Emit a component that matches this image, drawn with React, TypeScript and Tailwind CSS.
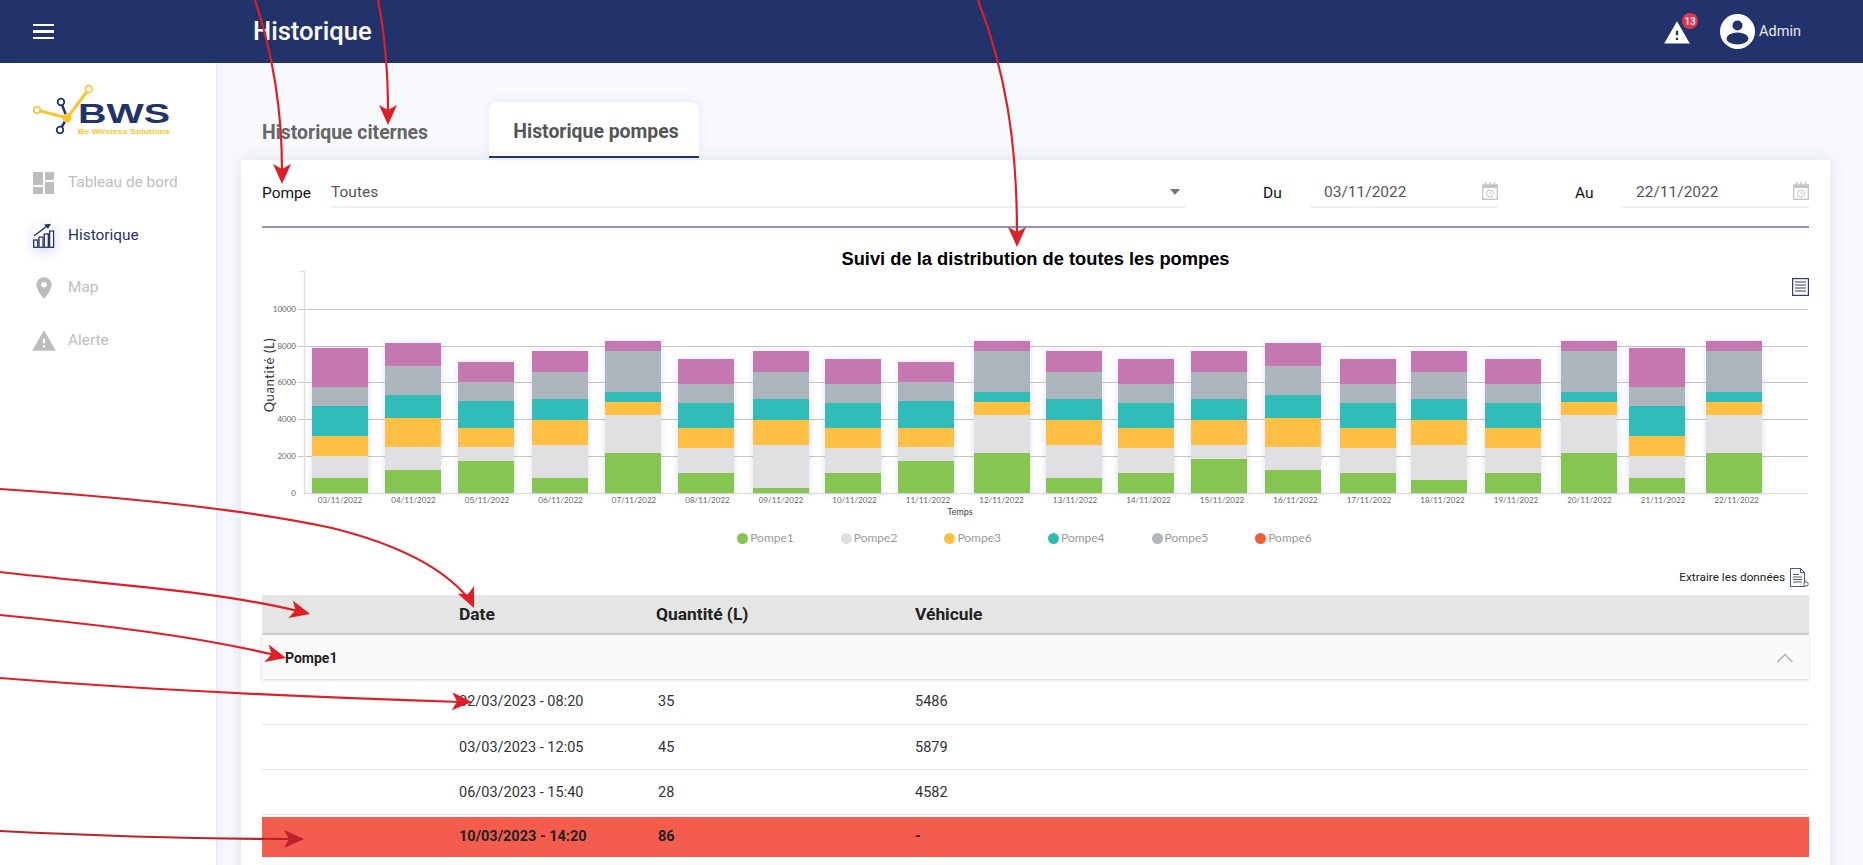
import { ChevronUp } from 'lucide-react'
import { MdLocationOn, MdWarning } from 'react-icons/md'

const COLORS = ['#c578b0', '#adb5bd', '#30bdb9', '#ffc044', '#e0e0e3', '#86c54f']
const LEGEND = [
  { name: 'Pompe1', color: '#86c54f' },
  { name: 'Pompe2', color: '#e0e0e3' },
  { name: 'Pompe3', color: '#ffc044' },
  { name: 'Pompe4', color: '#30bdb9' },
  { name: 'Pompe5', color: '#adb5bd' },
  { name: 'Pompe6', color: '#f05a38' },
]

// segment boundaries, top to bottom, page y
const A = [348, 387, 406, 436, 456, 478, 493]
const B = [343, 366, 395, 418, 447, 470, 493]
const C = [362, 382, 401, 428, 447, 461, 493]
const D = [351, 372, 399, 420, 445, 478, 493]
const E = [341, 351, 392, 402, 415, 453, 493]
const F = [359, 384, 403, 428, 448, 473, 493]
const G = [351, 372, 399, 420, 445, 488, 493]
const H = [351, 372, 399, 420, 445, 459, 493]
const I = [351, 372, 399, 420, 445, 480, 493]

const BARS = [
  { x: 312, label: '03/11/2022', y: A },
  { x: 385, label: '04/11/2022', y: B },
  { x: 458, label: '05/11/2022', y: C },
  { x: 532, label: '06/11/2022', y: D },
  { x: 605, label: '07/11/2022', y: E },
  { x: 678, label: '08/11/2022', y: F },
  { x: 753, label: '09/11/2022', y: G },
  { x: 825, label: '10/11/2022', y: F },
  { x: 898, label: '11/11/2022', y: C },
  { x: 974, label: '12/11/2022', y: E },
  { x: 1046, label: '13/11/2022', y: D },
  { x: 1118, label: '14/11/2022', y: F },
  { x: 1191, label: '15/11/2022', y: H },
  { x: 1265, label: '16/11/2022', y: B },
  { x: 1340, label: '17/11/2022', y: F },
  { x: 1411, label: '18/11/2022', y: I },
  { x: 1485, label: '19/11/2022', y: F },
  { x: 1561, label: '20/11/2022', y: E },
  { x: 1629, label: '21/11/2022', y: A },
  { x: 1706, label: '22/11/2022', y: E },
]

const GRID = [
  { y: 309.5, label: '10000' },
  { y: 346.5, label: '8000' },
  { y: 382.5, label: '6000' },
  { y: 419.5, label: '4000' },
  { y: 456.5, label: '2000' },
]

const ROWS = [
  { date: '02/03/2023 - 08:20', qty: '35', car: '5486', h: 'h-[46px]' },
  { date: '03/03/2023 - 12:05', qty: '45', car: '5879', h: 'h-[45px]' },
  { date: '06/03/2023 - 15:40', qty: '28', car: '4582', h: 'h-[45px]' },
]

function Logo() {
  return (
    <svg width="150" height="60" viewBox="30 82 150 60" className="block">
      <path d="M61 102 L67 118 L60 130" stroke="#22336b" strokeWidth="2.5" fill="none" />
      <circle cx="61" cy="102" r="3.3" fill="#fff" stroke="#22336b" strokeWidth="1.8" />
      <circle cx="60" cy="130" r="3.3" fill="#fff" stroke="#22336b" strokeWidth="1.8" />
      <path d="M37 110 L67 118 L89 89" stroke="#f5c62e" strokeWidth="3" fill="none" />
      <circle cx="37" cy="110" r="3.2" fill="#fff" stroke="#f5c62e" strokeWidth="1.6" />
      <circle cx="89" cy="89" r="3.4" fill="#fff" stroke="#f5c62e" strokeWidth="1.6" />
      <circle cx="67" cy="118" r="4.5" fill="#f5c62e" />
      <text
        x="78"
        y="123"
        fontSize="28"
        fontWeight="700"
        fill="#22336b"
        textLength="92"
        lengthAdjust="spacingAndGlyphs"
        className="font-['Liberation_Sans',sans-serif]"
      >
        BWS
      </text>
      <text
        x="78"
        y="134"
        fontSize="8"
        fontWeight="700"
        fill="#f5c62e"
        textLength="92"
        lengthAdjust="spacingAndGlyphs"
        className="font-['Liberation_Sans',sans-serif]"
      >
        Be Wireless Solutions
      </text>
    </svg>
  )
}

function DashboardIcon() {
  return (
    <svg width="21" height="22" viewBox="0 0 21 22" fill="#bdbdbd">
      <rect x="0" y="0" width="10" height="13" />
      <rect x="12" y="0" width="9" height="8" />
      <rect x="0" y="15" width="10" height="7" />
      <rect x="12" y="10" width="9" height="12" />
    </svg>
  )
}

function HistoryIcon() {
  return (
    <svg width="22" height="25" viewBox="0 0 22 25" fill="none" stroke="#22336b" strokeWidth="1.3">
      <rect x="0.7" y="17" width="4" height="7.3" />
      <rect x="6" y="14" width="4" height="10.3" />
      <rect x="11.3" y="11" width="4" height="13.3" />
      <rect x="16.6" y="8" width="4" height="16.3" />
      <path d="M1 13 L14 3" strokeWidth="1.5" />
      <path d="M11 1.4 L18 0.8 L15 6 Z" fill="#22336b" stroke="none" />
    </svg>
  )
}

function CalendarIcon() {
  return (
    <svg width="16" height="18" viewBox="0 0 16 18" fill="none" stroke="#c4c4c4" className="absolute right-0 top-[7px]">
      <rect x="0.7" y="3" width="14.6" height="14.3" strokeWidth="1.3" />
      <rect x="1" y="3" width="14" height="3" fill="#c4c4c4" stroke="none" />
      <path d="M3.5 0 V3 M8 0 V3 M12.5 0 V3" strokeWidth="1.5" />
      <circle cx="8" cy="11.5" r="3.5" strokeWidth="1" />
      <path d="M8 9.5 V11.5 H9.5" strokeWidth="0.8" />
    </svg>
  )
}

function MenuDocIcon() {
  return (
    <svg
      width="17"
      height="18"
      viewBox="0 0 17 18"
      fill="none"
      stroke="#2f3d6e"
      className="absolute right-0 top-[29px]"
    >
      <rect x="0.6" y="0.6" width="15.8" height="16.8" strokeWidth="1.2" />
      <path d="M3 4 H14 M3 7 H14 M3 10 H14 M3 13 H14" strokeWidth="1" />
    </svg>
  )
}

function ExportIcon() {
  return (
    <svg width="19" height="20" viewBox="0 0 19 20" fill="none" stroke="#3a4670" strokeWidth="0.9">
      <path d="M0.5 0.5 H10.5 L14.5 4.5 V18.5 H0.5 Z" />
      <path d="M10.5 0.5 V4.5 H14.5" />
      <path d="M3 6.5 H9 M3 9 H12 M3 11.5 H12 M3 14 H12" />
      <circle cx="16" cy="16" r="2.2" fill="#fff" />
    </svg>
  )
}

function Arrow({ d, x, y, angle, color = '#dd1f28' }: { d: string; x: number; y: number; angle: number; color?: string }) {
  return (
    <g>
      <path d={d} fill="none" stroke={color} strokeWidth="2.2" />
      <path d="M0 0 L-20 -9 L-15 0 L-20 9 Z" fill={color} transform={`translate(${x} ${y}) rotate(${angle})`} />
    </g>
  )
}

function Annotations() {
  return (
    <svg width="1863" height="865" viewBox="0 0 1863 865" className="pointer-events-none absolute left-0 top-0">
      <Arrow d="M255 0 C270 45 282 100 282 170" x={282} y={184} angle={90} />
      <Arrow d="M378 0 C385 35 388 70 388 112" x={388} y={125} angle={90} />
      <Arrow d="M978 0 C1005 70 1017 140 1017 234" x={1017} y={247} angle={90} />
      <Arrow d="M0 489 C120 497 250 510 332 528 C400 545 445 570 468 598" x={474} y={608} angle={66} />
      <Arrow d="M0 572 C110 585 210 590 298 611" x={310} y={614} angle={14} />
      <Arrow d="M0 615 C100 625 190 635 275 655" x={286} y={658} angle={14} />
      <Arrow d="M0 678 C150 690 330 698 460 702" x={472} y={702} angle={2} />
      <Arrow d="M0 831 C100 836 190 839 292 839" x={304} y={839} angle={0} color="#bb222c" />
    </svg>
  )
}

function Chart() {
  return (
    <svg width="1547" height="251" viewBox="262 269 1547 251" className="block font-['Lato',sans-serif]">
      {GRID.map((g) => (
        <g key={g.y}>
          <line x1="298" x2="1808" y1={g.y} y2={g.y} stroke="#c6c6cd" />
          <text x="296" y={g.y + 2.5} fontSize="8" fill="#666" textAnchor="end">
            {g.label}
          </text>
        </g>
      ))}
      <path d="M299 271.5 H304.5 V493.5 H1808" fill="none" stroke="#dfdfdf" strokeWidth="1.4" />
      <text x="296" y="496" fontSize="8" fill="#666" textAnchor="end">
        0
      </text>
      <g className="[filter:drop-shadow(0_0_3px_rgba(100,100,200,0.22))]">
        {BARS.map((bar) =>
          COLORS.map((color, i) => (
            <rect key={bar.x + color} x={bar.x} y={bar.y[i]} width="56" height={bar.y[i + 1] - bar.y[i]} fill={color} />
          )),
        )}
      </g>
      {BARS.map((bar, i) => (
        <text key={bar.label} x={340 + i * 73.5} y="503" fontSize="8" fill="#666" textAnchor="middle">
          {bar.label}
        </text>
      ))}
      <text x="960" y="515" fontSize="9" fill="#444" textAnchor="middle">
        Temps
      </text>
      <text x="0" y="0" fontSize="13" fill="#333" textAnchor="middle" letterSpacing="0.6" transform="translate(274 375) rotate(-90)">
        Quantité (L)
      </text>
    </svg>
  )
}

export default function App() {
  return (
    <div className="relative flex h-[865px] w-full flex-col overflow-hidden bg-[#f8f9fd] font-['Roboto',sans-serif]">
      <header className="flex h-[63px] shrink-0 items-center bg-[#22336b] pl-[33px] pr-[62px] text-white">
        <div className="flex w-[220px] flex-col gap-[4px]">
          <span className="h-[2.5px] w-[21px] bg-white" />
          <span className="h-[2.5px] w-[21px] bg-white" />
          <span className="h-[2.5px] w-[21px] bg-white" />
        </div>
        <h1 className="pb-[1px] text-[25.6px] font-medium">Historique</h1>
        <div className="ml-auto flex items-center">
          <div className="relative mr-[31px] mt-[3px] h-[24px] w-[24px]">
            <MdWarning className="absolute left-[-2px] top-[-2px] size-[28px] text-white" />
            <span className="absolute left-[17px] top-[-8px] flex size-[16px] items-center justify-center rounded-full bg-[#e0364c] text-[10px] font-medium text-white">
              13
            </span>
          </div>
          <svg width="35" height="35" viewBox="0 0 35 35" className="mr-[4px]">
            <circle cx="17.5" cy="17.5" r="17.5" fill="#fff" />
            <circle cx="17.5" cy="11.5" r="5" fill="#22336b" />
            <ellipse cx="17.5" cy="24.5" rx="11" ry="6" fill="#22336b" />
          </svg>
          <span className="text-[14.5px] text-[#e8eaf3]">Admin</span>
        </div>
      </header>

      <div className="flex min-h-0 flex-1">
        <aside className="w-[217px] shrink-0 border-r border-[#e9ebf2] bg-white shadow-[2px_0_8px_rgba(80,100,180,0.08)]">
          <div className="pl-[30px] pt-[19px]">
            <Logo />
          </div>
          <nav className="mt-[14px] flex flex-col pl-[33px] text-[15.4px]">
            <div className="flex h-[53px] items-center gap-[14px] text-[#bdbdbd]">
              <DashboardIcon />
              <span>Tableau de bord</span>
            </div>
            <div className="flex h-[53px] items-center gap-[13px] text-[#22336b]">
              <span className="shadow-[0_4px_12px_rgba(70,90,220,0.2)]">
                <HistoryIcon />
              </span>
              <span>Historique</span>
            </div>
            <div className="flex h-[52px] items-center gap-[11px] text-[#bdbdbd]">
              <MdLocationOn className="ml-[-2px] size-[26px]" />
              <span>Map</span>
            </div>
            <div className="flex h-[53px] items-center gap-[11px] text-[#bdbdbd]">
              <MdWarning className="ml-[-2px] size-[26px]" />
              <span>Alerte</span>
            </div>
          </nav>
        </aside>

        <main className="min-w-0 flex-1 pl-[24px] pr-[33px] pt-[39px]">
          <div className="flex h-[58px] items-start pl-[21px]">
            <div className="mt-[19px] w-[227px] text-[19.4px] font-bold leading-[24px] text-[#666]">Historique citernes</div>
            <div className="flex h-[56px] w-[210px] items-center justify-center rounded-t-lg border-b-2 border-[#22336b] bg-white pl-[4px] pt-[6px] text-[19.4px] font-bold text-[#555] shadow-[0_-2px_10px_rgba(80,100,180,0.1)]">
              Historique pompes
            </div>
          </div>

          <section className="h-[800px] bg-white px-[21px] shadow-[0_0_14px_rgba(70,90,170,0.15)]">
            <div className="flex h-[33px] pt-[15px] [box-sizing:content-box] text-[15.5px]">
              <span className="flex w-[69px] items-center pt-[5px] text-[#111]">Pompe</span>
              <div className="relative flex w-[855px] items-center border-b-2 border-[#f0f0f0] pt-[5px] text-[#555]">
                Toutes
                <span className="absolute right-[6px] top-[14px] h-0 w-0 border-x-[5.5px] border-t-[6px] border-x-transparent border-t-[#777]" />
              </div>
              <span className="ml-[77px] flex w-[47px] items-center pt-[5px] text-[#111]">Du</span>
              <div className="relative flex w-[188px] items-center border-b-2 border-[#f0f0f0] pl-[14px] pt-[5px] text-[#555]">
                03/11/2022
                <CalendarIcon />
              </div>
              <span className="ml-[77px] flex w-[46px] items-center pt-[5px] text-[#111]">Au</span>
              <div className="relative flex w-[188px] items-center border-b-2 border-[#f0f0f0] pl-[15px] pt-[5px] text-[#555]">
                22/11/2022
                <CalendarIcon />
              </div>
            </div>
            <div className="mt-[18px] h-[2px] bg-[#8f94b0]" />

            <div className="relative">
              <h2 className="mt-[21px] text-center text-[18.3px] font-bold leading-[20px] text-black font-['Liberation_Sans',sans-serif]">
                Suivi de la distribution de toutes les pompes
              </h2>
              <Chart />
              <MenuDocIcon />
            </div>

            <div className="flex h-[36px] items-center justify-center gap-[47px] pr-[22px] font-['Lato',sans-serif] text-xs text-[#999]">
              {LEGEND.map((item) => (
                <div key={item.name} className="flex items-center gap-[2px]">
                  <span className="size-[11px] rounded-full" style={{ backgroundColor: item.color }} />
                  {item.name}
                </div>
              ))}
            </div>

            <div className="mb-[8px] mt-[12px] flex h-[19px] items-center justify-end gap-[5px] text-[11.8px] text-[#222]">
              Extraire les données
              <ExportIcon />
            </div>

            <div className="grid h-[40px] grid-cols-[197px_197px_259px_1fr] items-center border-b-2 border-[#ccc] bg-[#e5e5e5] text-[17.4px] font-bold text-[#222]">
              <span />
              <span>Date</span>
              <span>Quantité (L)</span>
              <span>Véhicule</span>
            </div>
            <div className="mt-[1px] flex h-[43px] items-center justify-between bg-[#fafafa] pl-[23px] text-sm font-bold text-[#222] shadow-[0_1px_3px_rgba(0,0,0,0.18)]">
              Pompe1
              <ChevronUp className="mr-[10px] size-[28px] text-[#b5b5b5]" strokeWidth={1.5} />
            </div>
            {ROWS.map((row) => (
              <div
                key={row.date}
                className={`grid ${row.h} grid-cols-[197px_199px_257px_1fr] items-center border-b border-[#e8e8e8] pt-[1px] text-[14.5px] text-[#333]`}
              >
                <span />
                <span>{row.date}</span>
                <span>{row.qty}</span>
                <span>{row.car}</span>
              </div>
            ))}
            <div className="mt-[2px] grid h-[40px] grid-cols-[197px_199px_257px_1fr] items-center bg-[#f45c4d] text-[14.5px] font-bold text-[#222]">
              <span />
              <span>10/03/2023 - 14:20</span>
              <span>86</span>
              <span>-</span>
            </div>
            <div className="h-[10px] bg-[#fafafa]" />
          </section>
        </main>
      </div>

      <Annotations />
    </div>
  )
}
